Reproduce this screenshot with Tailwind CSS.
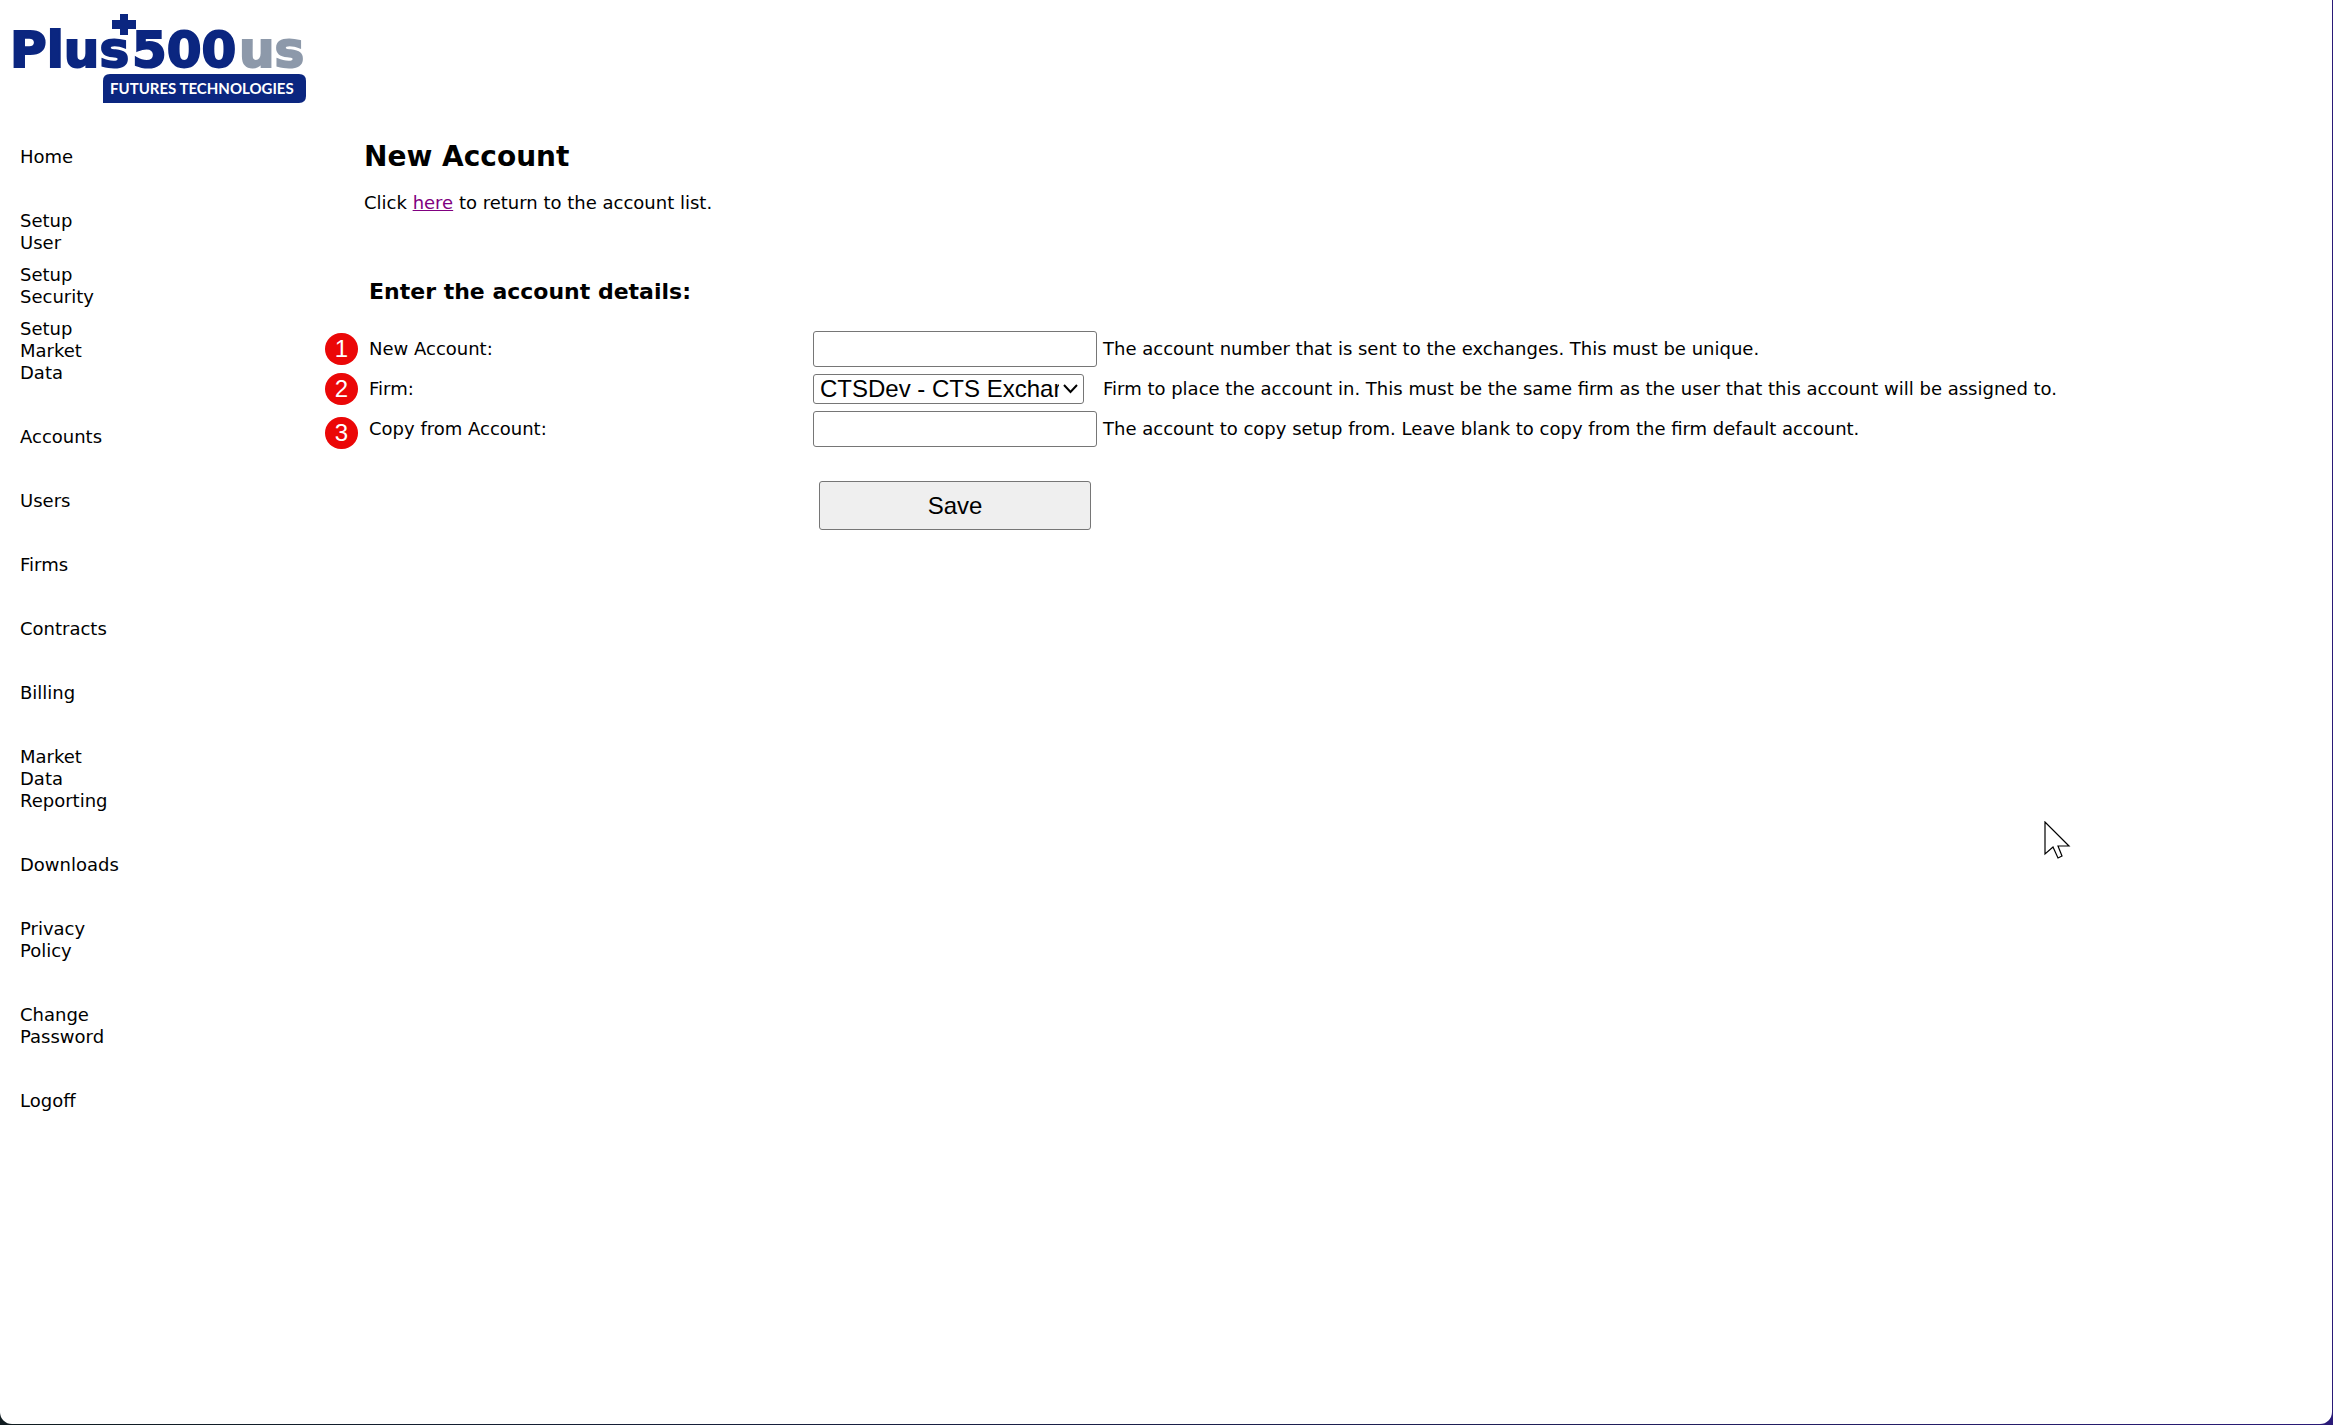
<!DOCTYPE html>
<html lang="en">
<head>
<meta charset="utf-8">
<title>New Account</title>
<script src="https://cdn.jsdelivr.net/npm/@tailwindcss/browser@4"></script>
</head>
<body class="bg-[#2b2b2d]">
<div class="min-h-screen bg-linear-to-r from-[#101c20] to-[#2a1a78] pr-px pb-px">
<div class="min-h-[calc(100vh-1px)] rounded-b-xl bg-white font-['DejaVu_Sans',Verdana,sans-serif] text-lg leading-[22px] text-black">
  <header class="px-2.5 pt-3.5">
    <svg class="block" width="296" height="89" viewBox="-4 0 296 89" role="img" aria-label="Plus500us Futures Technologies">
      <g font-family="DejaVu Sans" font-weight="bold" font-size="50" stroke-width="2" fill="#0b2680" stroke="#0b2680">
        <text x="-4" y="53">Plus</text>
        <text x="118" y="53">500</text>
        <text x="225" y="53" fill="#8d99aa" stroke="#8d99aa">us</text>
      </g>
      <path d="M106 0h8v6h8v9h-8v6h-8v-6h-8v-9h8z" fill="#0b2680"/>
      <path d="M89 89V67q0-7 7-7h189q7 0 7 7v15q0 7-7 7z" fill="#0b2680"/>
      <text x="96" y="80" font-family="Lato, sans-serif" font-weight="bold" font-size="15" fill="#fff">FUTURES TECHNOLOGIES</text>
    </svg>
  </header>
  <div class="flex pt-[43px]">
    <nav class="w-[364px] shrink-0 pl-5">
      <ul class="flex w-24 flex-col items-start gap-[42px]">
        <li><a href="#">Home</a></li>
        <li>
          <ul class="flex flex-col gap-2.5">
            <li><a href="#">Setup<br>User</a></li>
            <li><a href="#">Setup<br>Security</a></li>
            <li><a href="#">Setup<br>Market<br>Data</a></li>
          </ul>
        </li>
        <li><a href="#">Accounts</a></li>
        <li><a href="#">Users</a></li>
        <li><a href="#">Firms</a></li>
        <li><a href="#">Contracts</a></li>
        <li><a href="#">Billing</a></li>
        <li><a href="#">Market<br>Data<br>Reporting</a></li>
        <li><a href="#">Downloads</a></li>
        <li><a href="#">Privacy<br>Policy</a></li>
        <li><a href="#">Change<br>Password</a></li>
        <li><a href="#">Logoff</a></li>
      </ul>
    </nav>
    <main class="min-w-0 flex-1">
      <h1 class="text-[28px] leading-[22px] font-bold">New Account</h1>
      <p class="mt-6">Click <a href="#" class="text-[#800080] underline">here</a> to return to the account list.</p>
      <form class="pt-16 pl-[5px]">
        <h2 class="text-[22px] leading-7 font-bold">Enter the account details:</h2>
        <div class="mt-[25px] grid grid-cols-[444px_284px_1fr] items-center gap-y-1">
          <div class="relative">
            <span class="absolute top-1/2 right-full mr-[11px] flex h-8 w-[33px] -translate-y-1/2 items-center justify-center rounded-full bg-[#eb0707] font-['Liberation_Sans',sans-serif] text-2xl text-white">1</span>
            <label for="account">New Account:</label>
          </div>
          <input id="account" type="text" class="h-9 w-full rounded-[3px] border border-[#767676] px-1 font-['Liberation_Sans',sans-serif] text-2xl">
          <p class="pl-1.5">The account number that is sent to the exchanges. This must be unique.</p>

          <div class="relative">
            <span class="absolute top-1/2 right-full mr-[11px] flex h-8 w-[33px] -translate-y-1/2 items-center justify-center rounded-full bg-[#eb0707] font-['Liberation_Sans',sans-serif] text-2xl text-white">2</span>
            <label for="firm">Firm:</label>
          </div>
          <div class="relative my-[3px] w-[271px]">
            <select id="firm" class="block h-[30px] w-full appearance-none overflow-hidden rounded-[3px] border border-[#767676] bg-white pr-6 pl-1.5 font-['Liberation_Sans',sans-serif] text-2xl leading-7 text-clip whitespace-nowrap">
              <option>CTSDev - CTS Exchar</option>
            </select>
            <svg class="pointer-events-none absolute top-2.5 right-1.5" width="15" height="10" viewBox="0 0 15 10" fill="none" stroke="#000" stroke-width="2" aria-hidden="true"><path d="M1 1l6.500 7L14 1"/></svg>
          </div>
          <p class="pl-1.5">Firm to place the account in. This must be the same firm as the user that this account will be assigned to.</p>

          <div class="relative">
            <span class="absolute top-1/2 right-full mr-[11px] flex h-8 w-[33px] -translate-y-[12px] items-center justify-center rounded-full bg-[#eb0707] font-['Liberation_Sans',sans-serif] text-2xl text-white">3</span>
            <label for="copy">Copy from Account:</label>
          </div>
          <input id="copy" type="text" class="h-9 w-full rounded-[3px] border border-[#767676] px-1 font-['Liberation_Sans',sans-serif] text-2xl">
          <p class="pl-1.5">The account to copy setup from. Leave blank to copy from the firm default account.</p>

          <button type="button" class="col-start-2 mx-1.5 mt-[30px] h-[49px] rounded-[3px] border border-[#767676] bg-[#efefef] font-['Liberation_Sans',sans-serif] text-2xl">Save</button>
        </div>
      </form>
    </main>
  </div>
</div>
</div>
<svg class="absolute top-[821px] left-[2044px]" width="27" height="40" viewBox="0 0 27 40" fill="#fff" stroke="#000" stroke-width="1.200" aria-hidden="true"><path d="M1 1v32l8-7 5 11 4-2-4-10h11z"/></svg>
</body>
</html>
